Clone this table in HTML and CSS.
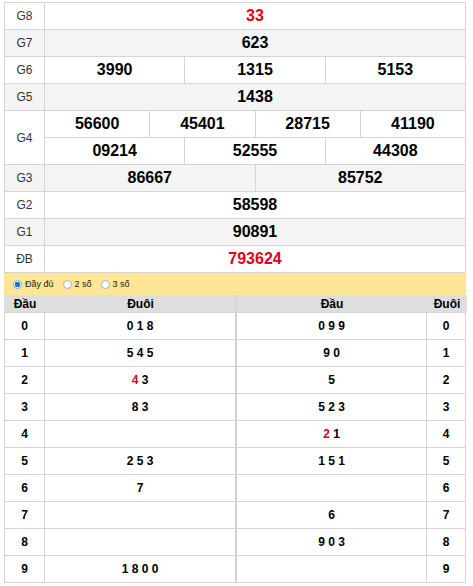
FILE: index.html
```html
<!DOCTYPE html>
<html lang="vi">
<head>
<meta charset="utf-8">
<title>KQ</title>
<link rel="stylesheet" href="styles.css">
</head>
<body>
<div class="page">
  <div class="kq">
    <div class="lbl">G8</div><div class="num s12 red">33</div>
    <div class="lbl alt">G7</div><div class="num s12 alt">623</div>
    <div class="lbl">G6</div><div class="num s4">3990</div><div class="num s4">1315</div><div class="num s4">5153</div>
    <div class="lbl alt">G5</div><div class="num s12 alt">1438</div>
    <div class="lbl r2">G4</div><div class="num s3">56600</div><div class="num s3">45401</div><div class="num s3">28715</div><div class="num s3">41190</div>
    <div class="num s4">09214</div><div class="num s4">52555</div><div class="num s4">44308</div>
    <div class="lbl alt">G3</div><div class="num s6 alt">86667</div><div class="num s6 alt">85752</div>
    <div class="lbl">G2</div><div class="num s12">58598</div>
    <div class="lbl alt">G1</div><div class="num s12 alt">90891</div>
    <div class="lbl">ĐB</div><div class="num s12 red">793624</div>
  </div>
  <div class="opts">
    <span class="opt"><span class="radio on"></span>Đầy đủ</span>
    <span class="opt"><span class="radio"></span>2 số</span>
    <span class="opt"><span class="radio"></span>3 số</span>
  </div>
  <div class="loto">
    <div class="side left">
      <div class="hd">Đầu</div><div class="hd mid">Đuôi</div>
      <div class="c">0</div><div class="c">0 1 8</div>
      <div class="c">1</div><div class="c">5 4 5</div>
      <div class="c">2</div><div class="c"><span><span class="red">4</span> 3</span></div>
      <div class="c">3</div><div class="c">8 3</div>
      <div class="c">4</div><div class="c"></div>
      <div class="c">5</div><div class="c">2 5 3</div>
      <div class="c">6</div><div class="c">7</div>
      <div class="c">7</div><div class="c"></div>
      <div class="c">8</div><div class="c"></div>
      <div class="c">9</div><div class="c">1 8 0 0</div>
    </div>
    <div class="side right">
      <div class="hd">Đầu</div><div class="hd">Đuôi</div>
      <div class="c">0 9 9</div><div class="c">0</div>
      <div class="c">9 0</div><div class="c">1</div>
      <div class="c">5</div><div class="c">2</div>
      <div class="c">5 2 3</div><div class="c">3</div>
      <div class="c"><span><span class="red">2</span> 1</span></div><div class="c">4</div>
      <div class="c">1 5 1</div><div class="c">5</div>
      <div class="c"></div><div class="c">6</div>
      <div class="c">6</div><div class="c">7</div>
      <div class="c">9 0 3</div><div class="c">8</div>
      <div class="c"></div><div class="c">9</div>
    </div>
  </div>
</div>
</body>
</html>
```

FILE: styles.css
```css
* { box-sizing: border-box; }
html, body { margin: 0; padding: 0; background: #fff; }
body { font-family: "Liberation Sans", Arial, sans-serif; color: #000; }
.page { padding: 2px 0 0 4px; width: 466px; }

.kq {
  display: grid;
  width: 462px;
  grid-template-columns: 40px repeat(12, 1fr);
  grid-auto-rows: 27px;
  border-top: 1px solid #d4d4d4;
  border-left: 1px solid #d4d4d4;
}
.kq > div {
  border-right: 1px solid #d4d4d4;
  border-bottom: 1px solid #d4d4d4;
  display: flex;
  align-items: center;
  justify-content: center;
}
.lbl { font-size: 12px; color: #333; }
.r2 { grid-row: span 2; }
.num { font-size: 16px; font-weight: bold; }
.s12 { grid-column: span 12; }
.s6 { grid-column: span 6; }
.s4 { grid-column: span 4; }
.s3 { grid-column: span 3; }
.alt { background: #f4f4f4; }
.red { color: #e2001a; }

.opts {
  width: 462px;
  height: 22px;
  background: #ffe596;
  display: flex;
  align-items: center;
  padding-left: 9px;
  gap: 9px;
  font-size: 9px;
  color: #222;
}
.opt { display: flex; align-items: center; gap: 3px; }
.radio {
  width: 9px; height: 9px;
  border-radius: 50%;
  border: 1px solid #a9a9a9;
  background: #fff;
}
.radio.on {
  border-color: #7fb0e8;
  background: radial-gradient(circle, #1a73e8 0 2.6px, #fff 3px);
}

.loto { display: flex; width: 462px; }
.side {
  display: grid;
  grid-auto-rows: 27px;
  grid-template-rows: 17px;
  border-left: 1px solid #d4d4d4;
  border-bottom: 1px solid #d4d4d4;
}
.left { width: 232px; grid-template-columns: 40px 191px; }
.right { width: 230px; grid-template-columns: 190px 39px; border-left-color: #cfcfcf; }
.hd {
  background: #dedede;
  font-size: 12px;
  font-weight: bold;
  display: flex;
  align-items: center;
  justify-content: center;
  height: 17px;
}
.left .hd:first-child { margin-left: -1px; padding-left: 1px; width: 41px; }
.right .hd:nth-child(2) { margin-right: -1px; }
.c {
  border-top: 1px solid #d4d4d4;
  border-right: 1px solid #d4d4d4;
  display: flex;
  align-items: center;
  justify-content: center;
  font-size: 12px;
  font-weight: bold;
  white-space: pre;
}
```
